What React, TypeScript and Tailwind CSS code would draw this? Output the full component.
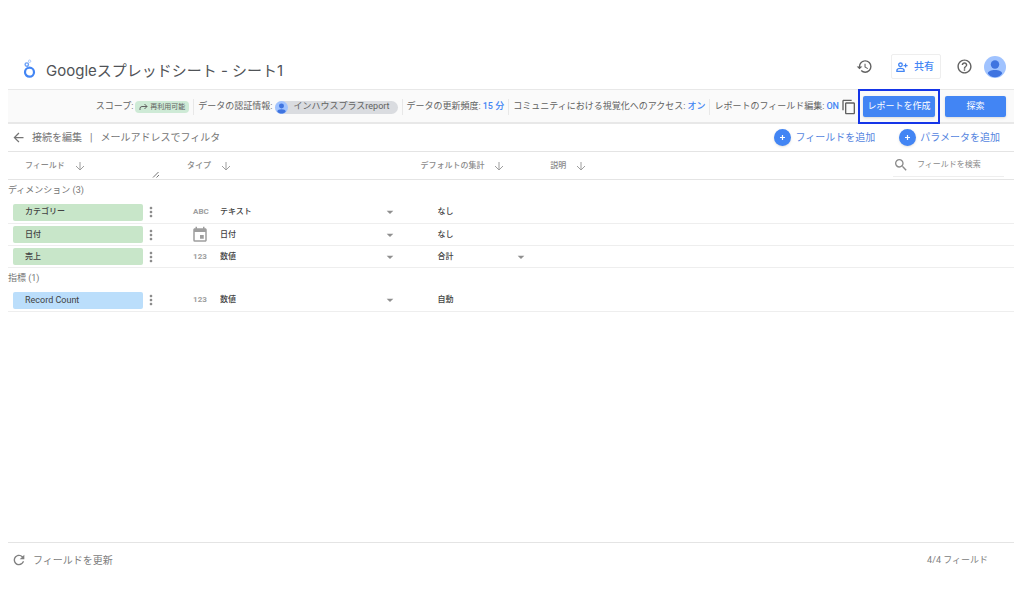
import type { ReactNode } from 'react';
import {
  MdArrowBack,
  MdArrowDropDown,
  MdContentCopy,
  MdEvent,
  MdHelpOutline,
  MdHistory,
  MdMoreVert,
  MdRefresh,
  MdSearch,
} from 'react-icons/md';

type Field = {
  name: string;
  kind: 'ABC' | '123' | 'date';
  type: string;
  aggregation: string;
  aggregationEditable?: boolean;
};

const dimensions: Field[] = [
  { name: 'カテゴリー', kind: 'ABC', type: 'テキスト', aggregation: 'なし' },
  { name: '日付', kind: 'date', type: '日付', aggregation: 'なし' },
  { name: '売上', kind: '123', type: '数値', aggregation: '合計', aggregationEditable: true },
];

const metrics: Field[] = [
  { name: 'Record Count', kind: '123', type: '数値', aggregation: '自動' },
];

function Logo() {
  return (
    <svg viewBox="0 0 14 20" className="h-5 w-3.5 shrink-0" fill="none" aria-hidden="true">
      <circle cx="7.500" cy="13.200" r="4.500" stroke="#4285f4" strokeWidth="2.200" />
      <circle cx="4.800" cy="5.600" r="1.700" stroke="#6ba0f6" strokeWidth="1.400" />
      <circle cx="7.600" cy="2.200" r="1.200" stroke="#a9c7fa" strokeWidth="1" />
      <path d="M5.400 7.200 6.200 8.800" stroke="#6ba0f6" strokeWidth="1.200" />
    </svg>
  );
}

function Avatar({ className }: { className: string }) {
  return (
    <svg viewBox="0 0 24 24" className={className} aria-hidden="true">
      <circle cx="12" cy="12" r="12" fill="#a0c3ff" />
      <circle cx="12" cy="9.200" r="4.600" fill="#3f74e0" />
      <path d="M4.200 19.200c0-2.600 3.600-4 7.800-4s7.800 1.400 7.800 4c-1.400 2.400-4.600 4-7.800 4s-6.400-1.600-7.800-4z" fill="#3f74e0" />
    </svg>
  );
}

function ShareIcon() {
  return (
    <svg viewBox="0 0 12 12" className="size-3" fill="none" stroke="#4285f4" aria-hidden="true">
      <circle cx="4.500" cy="3.800" r="1.800" strokeWidth="1.300" />
      <path d="M.9 10.300V9.400C.9 8 3 7.400 4.500 7.400S8.100 8 8.100 9.400v.9z" strokeWidth="1.300" />
      <path d="M9.600 2.600v4M7.600 4.600h4" strokeWidth="1.200" />
    </svg>
  );
}

function SortArrow() {
  return (
    <svg viewBox="0 0 10 10" className="size-2.5" fill="none" stroke="#9e9e9e" aria-hidden="true">
      <path d="M5 1v7.700M1 5l4 4 4-4" />
    </svg>
  );
}

function Detail({ label, children }: { label: string; children: ReactNode }) {
  return (
    <div className="flex h-4 items-center gap-0.5 border-l border-[#e8e8e8] px-1 pt-px first:border-l-0">
      <span>{label}</span>
      {children}
    </div>
  );
}

function AddButton({ label }: { label: string }) {
  return (
    <button className="flex items-center gap-1 text-[10px] text-[#5585e0]">
      <svg viewBox="0 0 17 17" className="size-[17px] rounded-full bg-[#4285f4] shadow" fill="none" stroke="#fff" aria-hidden="true">
        <path d="M8.500 6v5M6 8.500h5" strokeWidth="1.200" />
      </svg>
      {label}
    </button>
  );
}

function Heading({ label }: { label: string }) {
  return (
    <th scope="col" className="p-0 text-left font-medium">
      <button className="flex items-center gap-2.5">
        {label}
        <SortArrow />
      </button>
    </th>
  );
}

function Picker({ label, value, className }: { label: string; value: string; className: string }) {
  return (
    <div className={`flex items-center ${className}`}>
      <select aria-label={label} className="min-w-0 flex-1 appearance-none bg-transparent font-medium">
        <option>{value}</option>
      </select>
      <MdArrowDropDown className="size-4 text-[#8f8f8f]" />
    </div>
  );
}

function FieldRow({ field, metric = false }: { field: Field; metric?: boolean }) {
  return (
    <tr className="h-[22px] border-b border-[#eeeeee]">
      <td className="p-0 pl-[5px]">
        <div className="flex items-center">
          <button
            className={`h-[17px] w-[130px] rounded-xs pl-3 text-left ${metric ? 'bg-[#bbdefb] text-[9px]' : 'bg-[#c8e6c9] font-medium'}`}
          >
            {field.name}
          </button>
          <button aria-label={`${field.name}のメニュー`}>
            <MdMoreVert className="size-4 text-[#8a8a8a]" />
          </button>
        </div>
      </td>
      <td className="p-0">
        <div className="flex items-center">
          <span className="flex w-[33px] items-center pl-[6px] text-[8px] font-bold text-[#9e9e9e]">
            {field.kind === 'date' ? <MdEvent className="-ml-0.5 size-[18px]" /> : field.kind}
          </span>
          <Picker label={`${field.name}のタイプ`} value={field.type} className="w-[178px]" />
        </div>
      </td>
      <td className="p-0 pl-[17px] font-medium">
        {field.aggregationEditable ? (
          <Picker label={`${field.name}の集計`} value={field.aggregation} className="w-[92px]" />
        ) : (
          field.aggregation
        )}
      </td>
      <td className="p-0" />
      <td className="p-0" />
    </tr>
  );
}

function GroupRow({ label, line = false }: { label: string; line?: boolean }) {
  return (
    <tr className={`h-[22px] ${line ? 'border-t border-[#dddddd]' : ''}`}>
      <th scope="colgroup" colSpan={5} className="p-0 text-left text-[9px] font-normal text-[#757575]">
        {label}
      </th>
    </tr>
  );
}

export default function App() {
  return (
    <div className="flex min-h-screen flex-col bg-white pr-2.5 pl-2 font-[Roboto,'Noto_Sans_CJK_JP',sans-serif] whitespace-nowrap text-[#616161]">
      <header className="flex h-[89px] items-end justify-between pr-2 pb-2">
        <div className="flex items-center gap-2.5 pl-3.5">
          <Logo />
          <h1 className="pt-1 font-[Inter,'Noto_Sans_CJK_JP',sans-serif] text-[15px] leading-5 text-[#505357]">
            Googleスプレッドシート - シート1
          </h1>
        </div>
        <div className="flex items-center pb-0.5">
          <button aria-label="変更履歴">
            <MdHistory className="size-[17px] text-[#616161]" />
          </button>
          <button className="ml-[18px] flex h-[25px] items-center gap-1.5 rounded-xs border border-[#eeeeee] px-1 pr-1.5 text-[10px] font-medium text-[#4285f4]">
            <ShareIcon />
            共有
          </button>
          <button aria-label="ヘルプ" className="ml-[15px]">
            <MdHelpOutline className="size-[17px] text-[#616161]" />
          </button>
          <button aria-label="アカウント" className="ml-[11px]">
            <Avatar className="size-[22px]" />
          </button>
        </div>
      </header>

      <section className="flex h-[35px] items-center justify-end border-t border-b-2 border-[#e8e8e8] bg-[#fafafa] pt-px pr-2 text-[9px]">
        <Detail label="スコープ:">
          <span className="flex h-3 items-center gap-0.5 rounded-sm bg-[#ceead6] px-1 text-[7px]">
            <svg viewBox="0 0 9 8" className="h-2 w-[9px]" fill="none" stroke="#616161" aria-hidden="true">
              <path d="M1 7V5.500Q1 3.500 3 3.500H8M5.500 1 8 3.500 5.500 6" />
            </svg>
            再利用可能
          </span>
        </Detail>
        <Detail label="データの認証情報:">
          <span className="flex h-[13px] items-center gap-1.5 rounded-full bg-[#dadce0] pr-2">
            <Avatar className="size-[13px]" />
            インハウスプラスreport
          </span>
        </Detail>
        <Detail label="データの更新頻度:">
          <a href="#freshness" className="font-medium text-[#4285f4]">15 分</a>
        </Detail>
        <Detail label="コミュニティにおける視覚化へのアクセス:">
          <a href="#community" className="font-medium text-[#4285f4]">オン</a>
        </Detail>
        <Detail label="レポートのフィールド編集:">
          <a href="#editing" className="font-medium text-[#4285f4]">ON</a>
          <button aria-label="コピーを作成">
            <MdContentCopy className="size-4" />
          </button>
        </Detail>
        <div className="relative ml-0.5">
          <button className="block h-[21px] w-[72px] rounded-xs bg-[#4285f4] text-white shadow">レポートを作成</button>
          <span className="pointer-events-none absolute -inset-x-[5px] -inset-y-[7px] border-2 border-[#1535e8]" />
        </div>
        <button className="ml-2.5 h-[21px] w-[61px] rounded-xs bg-[#4285f4] text-white shadow">探索</button>
      </section>

      <nav className="flex h-[27px] items-center justify-between pr-3.5 pl-[3px] text-[10px] text-[#757575]">
        <div className="flex items-center gap-2">
          <a href="#connection" className="flex items-center gap-1.5">
            <MdArrowBack className="size-[15px]" />
            接続を編集
          </a>
          <span>|</span>
          <a href="#email">メールアドレスでフィルタ</a>
        </div>
        <div className="flex items-center gap-6">
          <AddButton label="フィールドを追加" />
          <AddButton label="パラメータを追加" />
        </div>
      </nav>

      <main>
        <table className="w-full table-fixed border-collapse text-[8px] text-[#424242]">
          <colgroup>
            <col className="w-[17.800%]" />
            <col className="w-[23.200%]" />
            <col className="w-[12.900%]" />
            <col />
            <col className="w-[121px]" />
          </colgroup>
          <thead>
            <tr className="h-7 border-t border-b border-[#e4e4e4] text-[#8a8a8a]">
              <th scope="col" className="p-0 pl-[17px] text-left font-medium">
                <div className="flex h-[26px] items-center gap-2.5">
                  <button className="flex items-center gap-2.5">
                    フィールド
                    <SortArrow />
                  </button>
                  <svg viewBox="0 0 8 8" className="mr-[27px] ml-auto size-2 self-end" stroke="#757575" aria-hidden="true">
                    <path d="M1 6.500 6.500 1M4.500 6.500 7 4" />
                  </svg>
                </div>
              </th>
              <Heading label="タイプ" />
              <Heading label="デフォルトの集計" />
              <Heading label="説明" />
              <th className="p-0 pr-2.5 font-normal">
                <label className="flex h-[22px] items-center gap-2 border-b border-[#eeeeee]">
                  <MdSearch className="size-4 shrink-0" />
                  <input
                    aria-label="フィールドを検索"
                    placeholder="フィールドを検索"
                    className="w-full min-w-0 bg-transparent placeholder:text-[#8a8a8a]"
                  />
                </label>
              </th>
            </tr>
          </thead>
          <tbody>
            <GroupRow label="ディメンション (3)" />
            {dimensions.map((field) => (
              <FieldRow key={field.name} field={field} />
            ))}
          </tbody>
          <tbody>
            <GroupRow label="指標 (1)" line />
            {metrics.map((field) => (
              <FieldRow key={field.name} field={field} metric />
            ))}
          </tbody>
        </table>
      </main>

      <footer className="mt-auto flex h-[72px] items-start justify-between border-t border-[#e4e4e4] pt-[9px] pr-[26px] pl-[3px] text-[#808080]">
        <button className="flex items-center gap-1.5 text-[10px]">
          <MdRefresh className="size-4" />
          フィールドを更新
        </button>
        <span className="text-[9px] leading-4">4/4 フィールド</span>
      </footer>
    </div>
  );
}
